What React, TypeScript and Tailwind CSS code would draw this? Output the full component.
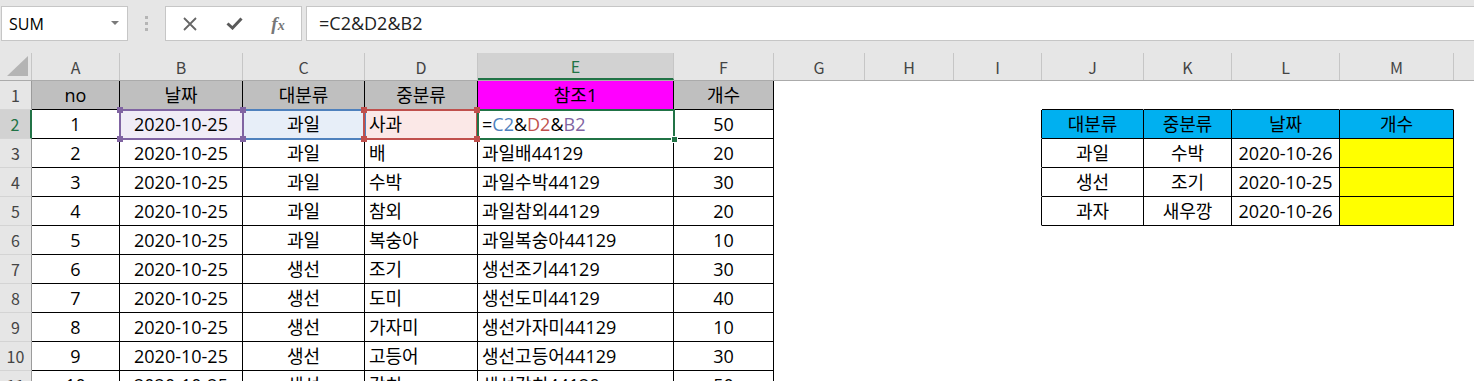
import React from "react";

const COLS = [
    { k: "A", w: "w-[88px]" },
    { k: "B", w: "w-[123px]" },
    { k: "C", w: "w-[122px]" },
    { k: "D", w: "w-[113px]" },
    { k: "E", w: "w-[196px]" },
    { k: "F", w: "w-[100px]" },
    { k: "G", w: "w-[91px]" },
    { k: "H", w: "w-[89px]" },
    { k: "I", w: "w-[88px]" },
    { k: "J", w: "w-[102px]" },
    { k: "K", w: "w-[88px]" },
    { k: "L", w: "w-[108px]" },
    { k: "M", w: "w-[114px]" },
    { k: "N", w: "w-[60px]" },
];

const subs = ["사과", "배", "수박", "참외", "복숭아", "조기", "도미", "가자미", "고등어", "갈치"];
const counts = ["50", "20", "30", "20", "10", "30", "40", "10", "30", "50"];

const mainRows: string[][] = [
    ["no", "날짜", "대분류", "중분류", "참조1", "개수"],
    ...subs.map((s, i) => {
        const cat = i < 5 ? "과일" : "생선";
        return [String(i + 1), "2020-10-25", cat, s, i === 0 ? "" : `${cat}${s}44129`, counts[i]];
    }),
];

const rightTable: Record<number, string[]> = {
    2: ["대분류", "중분류", "날짜", "개수"],
    3: ["과일", "수박", "2020-10-26", ""],
    4: ["생선", "조기", "2020-10-25", ""],
    5: ["과자", "새우깡", "2020-10-26", ""],
};

const cellFont = "font-['Open_Sans','Noto_Sans_CJK_KR',sans-serif] text-[18px]";

const FormulaRef = () => (
    <span>
        =<span className="text-[#4f81bd]">C2</span>&amp;<span className="text-[#c0504d]">D2</span>&amp;
        <span className="text-[#8064a2]">B2</span>
    </span>
);

// fill colour of the A:F block
const mainBg = (r: number, ci: number) => {
    if (r === 1) return ci === 4 ? "bg-[#ff00ff]" : "bg-[#bfbfbf]";
    if (r === 2 && ci === 1) return "bg-[#f0ecf6]";
    if (r === 2 && ci === 2) return "bg-[#e7eef8]";
    if (r === 2 && ci === 3) return "bg-[#fbe8e7]";
    return "bg-white";
};

const Cell = ({ r, ci }: { r: number; ci: number }) => {
    const col = COLS[ci];
    let text: React.ReactNode = "";
    let cls = "border-r border-b border-r-transparent border-b-transparent bg-white";
    let align = "justify-center";

    if (ci <= 5) {
        text = mainRows[r - 1][ci];
        cls = `border-r border-b border-r-black border-b-black ${mainBg(r, ci)}`;
        if (r > 1 && (ci === 3 || ci === 4)) align = "justify-start pl-[4px]";
        if (r === 2 && ci === 4) text = <FormulaRef />;
    } else if (ci === 8 && r >= 2 && r <= 5) {
        cls = "border-r border-b border-r-black border-b-transparent bg-white";
    } else if (ci >= 9 && ci <= 12) {
        if (r === 1) cls = "border-r border-b border-r-transparent border-b-black bg-white";
        if (r >= 2 && r <= 5) {
            text = rightTable[r][ci - 9];
            const bg = r === 2 ? "bg-[#00b0f0]" : ci === 12 ? "bg-[#ffff00]" : "bg-white";
            cls = `border-r border-b border-r-black border-b-black ${bg}`;
        }
    }

    return (
        <div className={`${col.w} h-full shrink-0 flex items-center whitespace-nowrap overflow-hidden text-black ${align} ${cls}`}>
            {text}
        </div>
    );
};

const SheetRow = ({ r }: { r: number }) => {
    const selected = r === 2;
    return (
        <div className="flex h-[29px]">
            <div
                className={`w-[32px] shrink-0 h-full flex items-center justify-center border-b border-b-[#d4d4d4] font-['Noto_Sans_CJK_KR',sans-serif] text-[16px] ${
                    selected
                        ? "bg-[#d2d2d2] text-[#217346] border-r-2 border-r-[#217346]"
                        : "bg-[#e6e6e6] text-[#444] border-r border-r-[#9b9b9b]"
                }`}
            >
                {r}
            </div>
            {COLS.map((_, ci) => (
                <Cell key={ci} r={r} ci={ci} />
            ))}
        </div>
    );
};

const Corner = ({ pos, color }: { pos: string; color: string }) => (
    <div className={`absolute w-[6px] h-[6px] ${pos} ${color}`} />
);

export default function App() {
    return (
        <div className="w-[1474px] h-[381px] overflow-hidden bg-white">
            {/* formula bar */}
            <div className="h-[53px] bg-[#e6e6e6] flex items-start pt-[6px] pl-[1px] font-['Open_Sans',sans-serif]">
                <div className="w-[127px] h-[35px] shrink-0 bg-white border border-[#c6c6c6] flex items-center justify-between pl-[7px] pr-[8px]">
                    <span className="text-[16px] text-black">SUM</span>
                    <svg width="8" height="5" viewBox="0 0 8 5">
                        <path d="M0 0 L8 0 L4 4 Z" fill="#7a7a7a" />
                    </svg>
                </div>
                <div className="w-[37px] h-[35px] shrink-0 flex flex-col items-center justify-center gap-[3px]">
                    <span className="w-[3px] h-[3px] bg-[#b5b5b5]" />
                    <span className="w-[3px] h-[3px] bg-[#b5b5b5]" />
                    <span className="w-[3px] h-[3px] bg-[#b5b5b5]" />
                </div>
                <div className="w-[137px] h-[35px] shrink-0 bg-white border border-[#c6c6c6] flex items-center">
                    <div className="w-[46px] flex justify-center pl-[2px]">
                        <svg width="14" height="14" viewBox="0 0 14 14">
                            <path d="M1 1 L13 13 M13 1 L1 13" stroke="#666" strokeWidth="1.8" />
                        </svg>
                    </div>
                    <div className="w-[44px] flex justify-center">
                        <svg width="17" height="13" viewBox="0 0 17 13">
                            <path d="M1.5 6.5 L6.5 11 L15.5 1.5" stroke="#5a5a5a" strokeWidth="3" fill="none" />
                        </svg>
                    </div>
                    <div className="w-[44px] flex justify-center font-['Liberation_Serif',serif] italic font-bold text-[19px] text-[#777] leading-none">
                        <span>
                            f<span className="text-[14px]">x</span>
                        </span>
                    </div>
                </div>
                <div className="flex-1 h-[35px] ml-[4px] bg-white border-y border-l border-[#c6c6c6] flex items-center pl-[12px] text-[18px] text-[#222]">
                    =C2&amp;D2&amp;B2
                </div>
            </div>

            {/* sheet */}
            <div className="relative">
                <div className="flex h-[28px] bg-[#e6e6e6] border-b border-b-[#ababab] font-['Noto_Sans_CJK_KR',sans-serif] text-[16px] text-[#444]">
                    <div className="w-[32px] shrink-0 h-full border-r border-r-[#c6c6c6] flex items-end justify-end pr-[3px] pb-[4px]">
                        <svg width="21" height="20" viewBox="0 0 21 20">
                            <path d="M21 0 L21 20 L0 20 Z" fill="#b4b4b4" />
                        </svg>
                    </div>
                    {COLS.map((c) => (
                        <div
                            key={c.k}
                            className={`${c.w} shrink-0 h-full flex items-center justify-center border-r border-r-[#c6c6c6] ${
                                c.k === "E" ? "bg-[#d2d2d2] text-[#217346] border-b-2 border-b-[#217346]" : ""
                            }`}
                        >
                            {c.k}
                        </div>
                    ))}
                </div>

                <div className={cellFont}>
                    {Array.from({ length: 11 }, (_, i) => (
                        <SheetRow key={i} r={i + 1} />
                    ))}
                </div>

                {/* reference highlights */}
                <div className="absolute left-[242px] top-[56px] w-[124px] h-[31px] border-2 border-[#4f81bd]" />
                <div className="absolute left-[119px] top-[56px] w-[125px] h-[31px] border-2 border-[#8064a2]" />
                <div className="absolute left-[363px] top-[56px] w-[115px] h-[31px] border-2 border-[#c0504d]" />
                <div className="absolute left-[477px] top-[56px] w-[198px] h-[31px] border-2 border-[#217346]" />
                <Corner pos="left-[117px] top-[54px]" color="bg-[#8064a2]" />
                <Corner pos="left-[240px] top-[54px]" color="bg-[#8064a2]" />
                <Corner pos="left-[117px] top-[83px]" color="bg-[#8064a2]" />
                <Corner pos="left-[240px] top-[83px]" color="bg-[#8064a2]" />
                <Corner pos="left-[361px] top-[54px]" color="bg-[#c0504d]" />
                <Corner pos="left-[474px] top-[54px]" color="bg-[#c0504d]" />
                <Corner pos="left-[361px] top-[83px]" color="bg-[#c0504d]" />
                <Corner pos="left-[474px] top-[83px]" color="bg-[#c0504d]" />
                <div className="absolute left-[671px] top-[83px] w-[7px] h-[7px] bg-[#217346] border border-white" />
            </div>
        </div>
    );
}
